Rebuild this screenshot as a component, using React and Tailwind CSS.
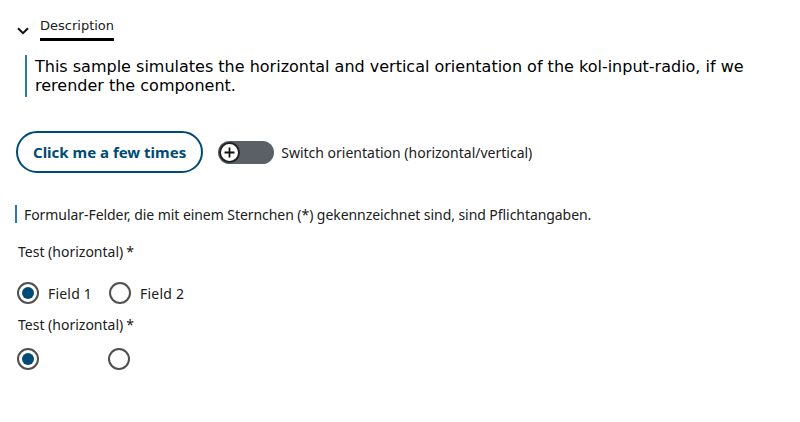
import React, { useState } from "react";

const kol = { fontFamily: '"Noto Sans", "Open Sans", sans-serif' };
const verdana = { fontFamily: '"DejaVu Sans", Verdana, sans-serif' };

function Radio({ checked, label }) {
  return (
    <label className="flex items-center gap-[9px] h-[22px]">
      <span className="w-[22px] h-[22px] rounded-full border-2 border-[#505050] flex items-center justify-center shrink-0">
        {checked && <span className="w-[12px] h-[12px] rounded-full bg-[#004b76]" />}
      </span>
      {label && <span className="text-[14px] text-[#202020] tracking-[0.2px]">{label}</span>}
    </label>
  );
}

function RadioGroup({ withLabels }) {
  return (
    <div>
      <div className="text-[14px] text-[#202020] leading-[20px]">Test (horizontal)<span className="ml-[3px]">*</span></div>
      <div className={`flex ${withLabels ? "gap-[17px] mt-[20px]" : "gap-[69px] mt-[13px]"} ml-[-1px]`}>
        <Radio checked label={withLabels ? "Field 1" : null} />
        <Radio label={withLabels ? "Field 2" : null} />
      </div>
    </div>
  );
}

export default function App() {
  const [open] = useState(true);
  return (
    <div className="bg-white w-[800px] h-[422px] overflow-hidden pt-[17px] text-[#202020]">
      <div className="flex items-center pl-[17px]" style={verdana}>
        <svg width="12" height="8" viewBox="0 0 12 8" className="mr-[11px] mt-[3px]">
          <path d="M1 1.2l5 5 5-5" fill="none" stroke="#111" strokeWidth="2" />
        </svg>
        <span className="text-[13px] leading-[18px] border-b-[3px] border-black pb-[3px]">Description</span>
      </div>
      {open && (
        <div className="ml-[25px] mt-[14px] border-l-2 border-[#2a7ab0] pl-[8px] py-[2px] mr-[40px]" style={verdana}>
          <p className="text-[16px] leading-[19px] text-black">
            This sample simulates the horizontal and vertical orientation of the kol-input-radio, if we rerender the component.
          </p>
        </div>
      )}
      <div className="flex items-center mt-[34px] pl-[16px]" style={kol}>
        <button className="h-[42px] px-[15px] rounded-full border-2 border-[#004b76] text-[#004b76] font-bold text-[15px]">
          Click me a few times
        </button>
        <div className="flex items-center ml-[15px]">
          <span className="w-[56px] h-[23px] rounded-full bg-[#5a6066] flex items-center pl-[1px]">
            <span className="w-[21px] h-[21px] rounded-full bg-white border-2 border-[#222] flex items-center justify-center">
              <svg width="11" height="11" viewBox="0 0 11 11">
                <path d="M5.5 0.5v10M0.5 5.5h10" stroke="#111" strokeWidth="1.8" />
              </svg>
            </span>
          </span>
          <span className="ml-[7px] text-[14px]">Switch orientation (horizontal/vertical)</span>
        </div>
      </div>
      <div className="pl-[15px] mt-[32px]" style={kol}>
        <div className="flex items-center border-l-2 border-[#2a7ab0] pl-[7px] h-[18px] text-[14px] tracking-[-0.06px]">
          Formular-Felder, die mit einem Sternchen (*) gekennzeichnet sind, sind Pflichtangaben.
        </div>
      </div>
      <div className="pl-[18px] mt-[19px] flex flex-col gap-[11px]" style={kol}>
        <RadioGroup withLabels />
        <RadioGroup />
      </div>
    </div>
  );
}
